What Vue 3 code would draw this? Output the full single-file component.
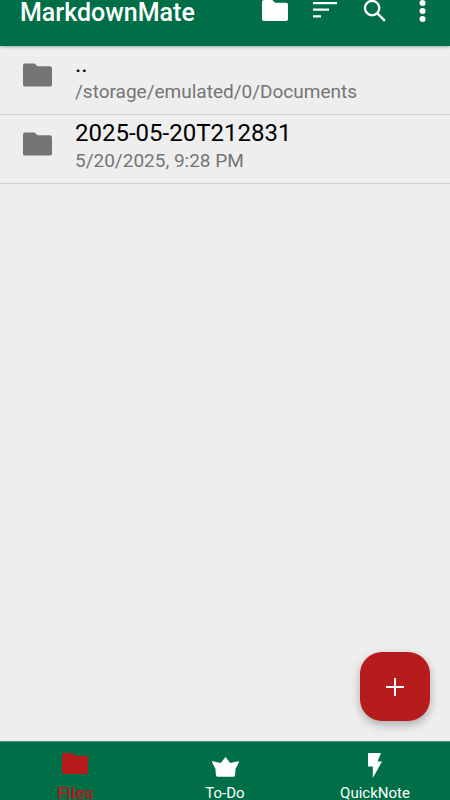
<script setup>
const rows = [
  { name: '..', sub: '/storage/emulated/0/Documents' },
  { name: '2025-05-20T212831', sub: '5/20/2025, 9:28 PM' },
]
const folder = 'M10 4H3.500A1.500 1.500 0 0 0 2 5.500v13A1.500 1.500 0 0 0 3.500 20h17a1.500 1.500 0 0 0 1.500-1.500v-11A1.500 1.500 0 0 0 20.500 6H12z'
</script>

<template>
  <div class="app">
    <header class="bar">
      <h1 class="title">MarkdownMate</h1>
      <div class="actions">
        <svg class="a-folder" viewBox="2 4 20 16" width="26" height="21"><path :d="folder" fill="#fff" /></svg>
        <svg class="a-sort" viewBox="0 0 24 16" width="24" height="16"><path d="M0 0h24v2.200H0zM0 6.600h16v2.200H0zM0 13.200h8v2.200H0z" fill="#fff" /></svg>
        <svg class="a-search" viewBox="0 0 24 24" width="23" height="23"><circle cx="9.500" cy="9.500" r="7.500" fill="none" stroke="#fff" stroke-width="2.400" /><path d="M15 15l7.800 7.800" stroke="#fff" stroke-width="2.400" fill="none" /></svg>
        <svg class="a-more" viewBox="0 0 7 22" width="7" height="22"><circle cx="3.500" cy="3" r="3" fill="#fff" /><circle cx="3.500" cy="11" r="3" fill="#fff" /><circle cx="3.500" cy="19" r="3" fill="#fff" /></svg>
      </div>
    </header>

    <main class="list">
      <div v-for="r in rows" :key="r.name" class="row">
        <svg class="row-icon" viewBox="2 4 20 16" width="29" height="24"><path :d="folder" fill="#757575" /></svg>
        <div class="row-text">
          <div class="name">{{ r.name }}</div>
          <div class="sub">{{ r.sub }}</div>
        </div>
      </div>
    </main>

    <button class="fab" aria-label="Add">
      <svg viewBox="0 0 18 18" width="18" height="18"><path d="M8 0h2v8h8v2h-8v8H8v-8H0V8h8z" fill="#fff" /></svg>
    </button>

    <nav class="tabs">
      <div class="tab active">
        <svg viewBox="2 4 20 16" width="26" height="21"><path :d="folder" fill="#b71c1c" /></svg>
        <span>Files</span>
      </div>
      <div class="tab">
        <svg class="crown" viewBox="0 0 27 20" width="27" height="20"><path d="M13.500 0l4.800 6 8-1.800c.8-.2.800.3.600.9-1 2.700-2.200 5-3.300 6.700l-.6 6.800c-.1.8-.6 1.200-1.400 1.200H5.400c-.8 0-1.300-.4-1.400-1.200l-.6-6.800C2.300 10.100 1.100 7.800.1 5.100c-.2-.6-.2-1.100.6-.9l8 1.800z" fill="#fff" /></svg>
        <span>To-Do</span>
      </div>
      <div class="tab">
        <svg class="bolt" viewBox="0 0 14 25" width="14" height="25"><path d="M0 0h13l-3.500 8.500H14L4.800 25V13.500H0z" fill="#fff" /></svg>
        <span>QuickNote</span>
      </div>
    </nav>
  </div>
</template>

<style scoped>
.app {
  position: relative;
  width: 450px;
  height: 800px;
  overflow: hidden;
  display: flex;
  flex-direction: column;
  background: #eeeeee;
  font-family: Roboto, sans-serif;
}
.bar {
  flex: 0 0 46px;
  box-sizing: border-box;
  display: flex;
  align-items: flex-start;
  justify-content: space-between;
  padding: 0 24px 0 20px;
  background: #006e47;
  box-shadow: 0 1px 3px rgba(0, 0, 0, 0.3);
  position: relative;
  z-index: 1;
}
.title {
  margin: 0;
  color: #fff;
  font-size: 25px;
  font-weight: 500;
  line-height: 25px;
}
.actions {
  display: flex;
  align-items: flex-start;
}
.a-sort { margin: 2px 0 0 25px; }
.a-search { margin: -1px 0 0 26px; }
.a-more { margin: 0 0 0 33px; }
.list { flex: 1; min-height: 0; }
.row {
  box-sizing: border-box;
  height: 69px;
  display: flex;
  align-items: center;
  padding: 0 0 6px 23px;
  border-bottom: 1px solid #cfcfcf;
}
.row-icon { flex: none; margin: -4px 23px 0 0; }
.row-text { min-width: 0; }
.name {
  color: #000;
  font-size: 24px;
  line-height: 29px;
}
.sub {
  color: #757575;
  font-size: 19px;
  line-height: 25px;
}
.fab {
  position: absolute;
  left: 360px;
  top: 652px;
  width: 70px;
  height: 69px;
  border: 0;
  border-radius: 22px;
  background: #b71c1c;
  box-shadow: 0 4px 10px rgba(0, 0, 0, 0.28);
  display: flex;
  align-items: center;
  justify-content: center;
  padding: 0;
}
.tabs {
  flex: 0 0 59px;
  min-height: 0;
  overflow: hidden;
  display: grid;
  grid-template-columns: repeat(3, 150px);
  background: #006e47;
  border-top: 1px solid #4f9579;
  box-sizing: border-box;
}
.tab {
  display: flex;
  flex-direction: column;
  align-items: center;
  color: #fff;
  font-size: 15px;
  line-height: 18px;
  padding-top: 11px;
}
.tab svg { display: block; flex: none; margin-bottom: 10px; }
.tab .crown { margin-top: 4px; margin-bottom: 7px; }
.tab .bolt { margin-bottom: 6px; }
.active { color: #ab2020; font-size: 17px; font-weight: 700; }
</style>
